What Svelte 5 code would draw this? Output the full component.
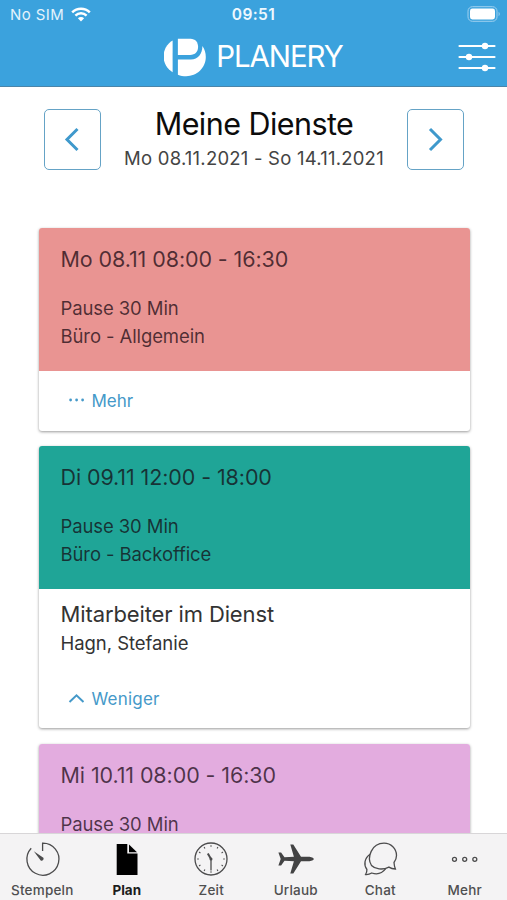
<script>
    // Shifts of the current week
    const shifts = [
        { title: "Mo 08.11 08:00 - 16:30", pause: "Pause 30 Min", place: "Büro - Allgemein", color: "#e99492", open: false, staff: "" },
        { title: "Di 09.11 12:00 - 18:00", pause: "Pause 30 Min", place: "Büro - Backoffice", color: "#1fa597", open: true, staff: "Hagn, Stefanie" },
        { title: "Mi 10.11 08:00 - 16:30", pause: "Pause 30 Min", place: "", color: "#e3acdf", open: false, staff: "" }
    ];

    // Bottom navigation
    const tabs = [
        { id: "stamp", label: "Stempeln" },
        { id: "plan", label: "Plan" },
        { id: "time", label: "Zeit" },
        { id: "holiday", label: "Urlaub" },
        { id: "chat", label: "Chat" },
        { id: "more", label: "Mehr" }
    ];

    const ticks = [0, 30, 60, 90, 120, 150, 180, 210, 240, 270, 300, 330];

    let cards = $state(shifts);
    let activeTab = $state("plan");
</script>

<div class="app">
    <header>
        <div class="status">
            <div class="carrier">
                <span>No SIM</span>
                <svg width="20" height="15" viewBox="0 0 20 15" fill="none" stroke="#fff">
                    <path d="M1.2 5.3a12.6 12.6 0 0 1 17.6 0" stroke-width="2.5" />
                    <path d="M4.4 8.6a8 8 0 0 1 11.2 0" stroke-width="2.4" />
                    <path d="M10 14.4L6.9 11.3a4.4 4.4 0 0 1 6.2 0z" fill="#fff" stroke="none" />
                </svg>
            </div>
            <span class="clock">09:51</span>
            <svg class="battery" width="34" height="16" viewBox="0 0 34 16">
                <rect x="1" y=".7" width="29" height="14.6" rx="4.4" fill="none" stroke="#9fd0ef" stroke-width="1" />
                <rect x="3" y="2.6" width="25" height="10.8" rx="2.4" fill="#fff" />
                <path d="M31.6 5.8c1.5.8 1.5 3.6 0 4.4z" fill="#9fd0ef" />
            </svg>
        </div>
        <div class="titlebar">
            <div class="brand">
                <svg width="42" height="39" viewBox="0 0 42 39" fill="#fff">
                    <path d="M8.6 2.6v31.6A18.3 18.3 0 0 1 8.6 2.6z" />
                    <path d="M13.9.7h12.6c4.8 0 7.6 3.6 7.6 8 0 5-3 8.2-8 8.2H13.9z" />
                    <path d="M13.9 21.4H27c7 0 11.300-5.200 11.400-13.400 2.300 3.200 3.400 6.900 3.400 11.100 0 10.900-9 19.200-19.600 19.200-3 0-5.700-.4-8.300-1.600z" />
                </svg>
                <span>PLANERY</span>
            </div>
            <svg class="filter" width="38" height="32" viewBox="0 0 38 32" stroke="#fff" fill="#fff">
                <path d="M1.500 5h35M1.500 16h35M1.500 27h35" stroke-width="2.2" stroke-linecap="round" />
                <circle cx="27" cy="5" r="3.2" stroke="none" />
                <circle cx="11" cy="16" r="3.2" stroke="none" />
                <circle cx="27" cy="27" r="3.2" stroke="none" />
            </svg>
        </div>
    </header>

    <main>
        <div class="week">
            <button aria-label="Zurück">
                <svg width="18" height="26" viewBox="0 0 18 26"><path d="M14.500 2L4 12.500l10.500 10.500" /></svg>
            </button>
            <div class="range">
                <h1>Meine Dienste</h1>
                <p>Mo 08.11.2021 - So 14.11.2021</p>
            </div>
            <button aria-label="Weiter">
                <svg width="18" height="26" viewBox="0 0 18 26"><path d="M3 2L13.500 12.500L3 23" /></svg>
            </button>
        </div>

        {#each cards as card}
            <section class="card">
                <div class="shift" style:background-color={card.color}>
                    <h2>{card.title}</h2>
                    <p>{card.pause}</p>
                    {#if card.place}
                        <p>{card.place}</p>
                    {/if}
                </div>
                {#if card.open}
                    <div class="staff">
                        <h3>Mitarbeiter im Dienst</h3>
                        <p>{card.staff}</p>
                    </div>
                {/if}
                <!-- no details to expand without a place -->
                {#if card.place}
                    <button class="toggle" onclick={() => (card.open = !card.open)}>
                        {#if card.open}
                            <svg width="18" height="18" viewBox="0 0 18 18"><path d="M1.500 12L8.500 5.300l7 6.700" fill="none" stroke="#4599c9" stroke-width="2" /></svg>
                            <span class="less">Weniger</span>
                        {:else}
                            <svg width="18" height="18" viewBox="0 0 18 18" fill="#4599c9">
                                <circle cx="2.6" cy="8" r="1.4" />
                                <circle cx="8.6" cy="8" r="1.4" />
                                <circle cx="14.6" cy="8" r="1.4" />
                            </svg>
                            <span>Mehr</span>
                        {/if}
                    </button>
                {/if}
            </section>
        {/each}
    </main>

    <nav>
        {#each tabs as tab}
            <button class="tab" class:active={activeTab === tab.id} onclick={() => (activeTab = tab.id)}>
                <svg width="40" height="40" viewBox="0 0 40 40" fill="none" stroke="#4c4c4d" stroke-width="1.3">
                    {#if tab.id === "stamp"}
                        <path d="M20.600 12V4.200A16 16 0 1 1 9.200 9.300" />
                        <path d="M11.800 12.200l9.600 6.500a2 2 0 0 1-2.700 2.700z" fill="#4c4c4d" stroke="none" />
                    {:else if tab.id === "plan"}
                        <path d="M9.700 5h10.600v9.500h10.200V36H9.700z" fill="#000" stroke="none" />
                        <path d="M22 5.500l8 7.700h-8z" fill="#000" stroke="none" />
                    {:else if tab.id === "time"}
                        <circle cx="20" cy="20" r="16" />
                        {#each ticks as angle}
                            <path d="M20 6.200v1.600" stroke-width="1.1" transform="rotate({angle} 20 20)" />
                        {/each}
                        <path d="M20 20v11.500" />
                        <path d="M20 20l-3.200-5.400" stroke-width="2" />
                        <circle cx="20" cy="20" r="1.5" fill="#4c4c4d" stroke="none" />
                    {:else if tab.id === "holiday"}
                        <path
                            d="M14.300 5.500h3l7.700 12.300h7.500c2.600 0 5.300 1.200 5.300 2.200s-2.700 2.200-5.300 2.200H25l-7.700 12.300h-3l3.600-12.200-9.400-.6-3.400 4.800H2.400L4.700 20l-2.300-6.500h2.700l3.400 4.800 9.400-.6z"
                            fill="#434344" stroke="none"
                        />
                    {:else if tab.id === "chat"}
                        <path d="M11.500 26.500C6.500 18.500 11.500 4.200 24 4.200c7 0 12.500 5.500 12.500 12.200 0 2.700-.9 5-2.500 7.100.1 2.500.6 4.300 1.400 6.500-2.600 0-4.600-.6-6.500-1.900-6.400 3.300-14 2-17.400-1.600z" />
                        <path d="M10 15.200c-5.700 4.200-6.500 10.500-3.100 15.300.1 1.900-.5 3.600-1.300 5 2.500.2 4.300-.4 6.100-1.500 5.200 1.800 10.400.5 14-4.300" />
                    {:else}
                        <circle cx="9.5" cy="20.300" r="2" />
                        <circle cx="19.700" cy="20.300" r="2" />
                        <circle cx="29.800" cy="20.300" r="2" />
                    {/if}
                </svg>
                <span>{tab.label}</span>
            </button>
        {/each}
    </nav>
</div>

<style>
    :global(body) {
        background-color: #fff;
    }

    .app {
        height: 900px;
        display: flex;
        flex-direction: column;
        overflow: hidden;
        font-family: Inter, "Liberation Sans", sans-serif;
        color: #333;
    }

    h1, h2, h3, p {
        margin: 0;
        font-weight: 400;
        white-space: nowrap;
    }

    button {
        font-family: inherit;
        background: none;
        border: none;
        padding: 0;
        margin: 0;
    }

    svg {
        display: block;
        flex: none;
    }

    header {
        flex: none;
        box-sizing: border-box;
        height: 87px;
        background-color: #3ba2dd;
        border-bottom: 1px solid #4b85a9;
        color: #fff;
    }

    .status {
        display: grid;
        grid-template-columns: 1fr auto 1fr;
        align-items: center;
        height: 28px;
        padding: 0 8px 0 10px;
    }

    .carrier {
        display: flex;
        align-items: center;
        gap: 7px;
        font-size: 15px;
        letter-spacing: 0.4px;
        color: #e3f3fc;
    }

    .clock {
        font-size: 15.5px;
        font-weight: 600;
        letter-spacing: 0.4px;
        margin-right: 2px;
        color: #eef8fe;
        padding-top: 1px;
    }

    .battery {
        justify-self: end;
        margin-right: -2px;
    }

    .titlebar {
        display: grid;
        grid-template-columns: 1fr auto 1fr;
        align-items: center;
        height: 58px;
        padding: 0 11px;
    }

    .brand {
        grid-column: 2;
        display: flex;
        align-items: center;
        gap: 10px;
        font-size: 29.5px;
        letter-spacing: -1.1px;
    }

    .brand span {
        padding-bottom: 2px;
    }

    .filter {
        justify-self: end;
    }

    main {
        flex: 1;
        min-height: 0;
        overflow: hidden;
        padding: 0 37.5px 0 38.5px;
    }

    .week {
        display: flex;
        justify-content: space-between;
        align-items: flex-start;
        height: 119px;
        padding: 22px 5px 0;
    }

    .week button {
        box-sizing: border-box;
        width: 57px;
        height: 61px;
        border: 1.5px solid #65a3c6;
        border-radius: 5px;
        display: flex;
        align-items: center;
        justify-content: center;
    }

    .week path {
        fill: none;
        stroke: #3f99cc;
        stroke-width: 3;
    }

    .range {
        text-align: center;
        margin-top: -2px;
    }

    h1 {
        font-size: 30.5px;
        line-height: 34px;
        letter-spacing: -0.55px;
        color: #0c0c0c;
    }

    .range p {
        font-size: 18.5px;
        line-height: 34px;
        letter-spacing: 0.22px;
        color: #444;
    }

    .card {
        margin-bottom: 15.75px;
        border-radius: 3px;
        overflow: hidden;
        background-color: #fff;
        box-shadow: 0 1px 3px rgba(0, 0, 0, 0.4);
    }

    .shift {
        height: 143px;
        box-sizing: border-box;
        padding: 14.5px 22px 0;
        color: rgba(20, 5, 15, 0.73);
    }

    h2 {
        font-size: 21.5px;
        line-height: 32px;
        letter-spacing: -0.1px;
        margin-bottom: 19.5px;
    }

    .card p {
        font-size: 18.5px;
        line-height: 28px;
        letter-spacing: -0.1px;
    }

    .staff {
        height: 79.5px;
        padding: 9.5px 22px 0;
        box-sizing: border-box;
    }

    h3 {
        font-size: 22px;
        line-height: 31px;
        letter-spacing: -0.12px;
    }

    .staff p {
        line-height: 26px;
        letter-spacing: -0.05px;
    }

    .toggle {
        display: flex;
        align-items: center;
        gap: 6px;
        height: 59.5px;
        padding-left: 29px;
        font-size: 17px;
        color: #4599c9;
    }

    .less {
        letter-spacing: 0.2px;
    }

    nav {
        flex: none;
        box-sizing: border-box;
        height: 67px;
        display: grid;
        grid-template-columns: repeat(6, 1fr);
        background-color: #f4f3f4;
        border-top: 1px solid #d8d6d8;
    }

    .tab {
        display: flex;
        flex-direction: column;
        align-items: center;
        padding-top: 5px;
        font-size: 13.5px;
        font-weight: 500;
        line-height: 22px;
        letter-spacing: 0.2px;
        color: #4f4f50;
    }

    .tab.active {
        font-weight: 700;
        letter-spacing: 0;
        color: #1c1c1c;
    }
</style>
